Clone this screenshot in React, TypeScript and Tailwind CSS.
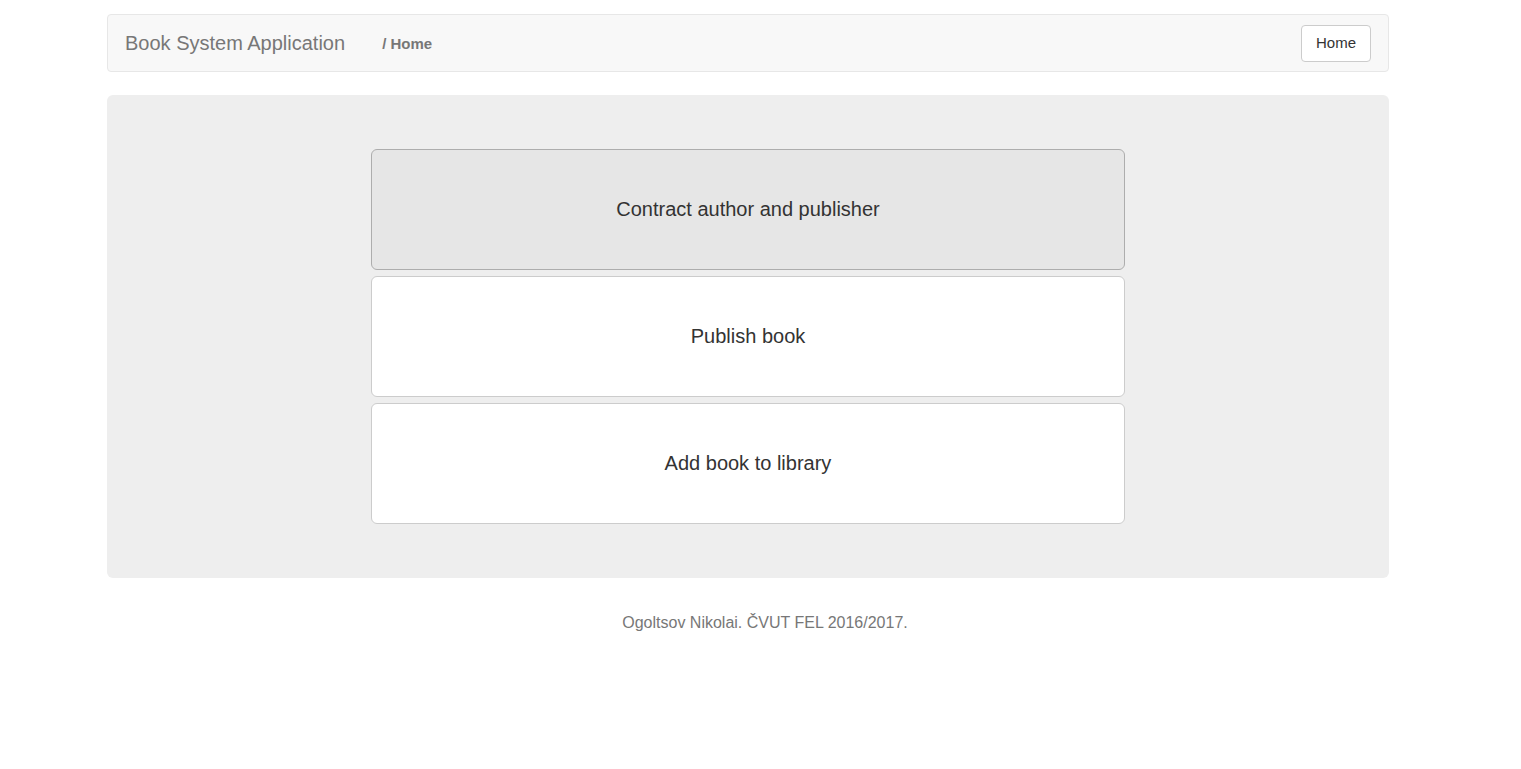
export default function App() {
  const items = ["Contract author and publisher", "Publish book", "Add book to library"];
  return (
    <div className="min-h-[769px] bg-white" style={{ fontFamily: '"Liberation Sans", Arial, sans-serif' }}>
      <div className="ml-[107px] w-[1282px] pt-[14px]">
        <nav className="flex h-[58px] items-center rounded-[4px] border border-[#e7e7e7] bg-[#f8f8f8] pl-[17px] pr-[17px]">
          <span className="text-[20px] leading-none text-[#777]">Book System Application</span>
          <span className="ml-[37px] text-[15px] font-bold leading-none text-[#777]">/ Home</span>
          <button className="ml-auto h-[37px] rounded-[4px] border border-[#ccc] bg-white px-[14px] text-[15px] text-[#333]">
            Home
          </button>
        </nav>
        <div className="mt-[23px] flex h-[483px] flex-col items-center rounded-[6px] bg-[#eee] pt-[54px]">
          <div className="flex w-[754px] flex-col gap-[6px]">
            {items.map((t, i) => (
              <button
                key={t}
                className={
                  "flex h-[121px] w-full items-center justify-center rounded-[6px] border pb-[2px] text-[20px] text-[#333] " +
                  (i === 0 ? "border-[#adadad] bg-[#e6e6e6]" : "border-[#ccc] bg-white")
                }
              >
                {t}
              </button>
            ))}
          </div>
        </div>
      </div>
      <footer className="mt-[33px] pl-[9px] text-center text-[16px] text-[#777]">Ogoltsov Nikolai. ČVUT FEL 2016/2017.</footer>
    </div>
  );
}
